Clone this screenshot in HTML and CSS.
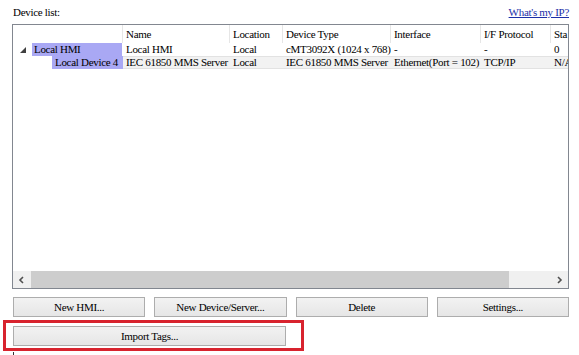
FILE: index.html
```html
<!DOCTYPE html>
<html>
<head>
<meta charset="utf-8">
<link rel="stylesheet" href="styles.css">
</head>
<body>
<div class="page">
  <div class="topbar">
    <span class="label">Device list:</span>
    <a class="link" href="#">What's my IP?</a>
  </div>
  <div class="listbox">
    <div class="grid">
      <div class="hrow">
        <div class="c c0"></div>
        <div class="c c1">Name</div>
        <div class="c c2">Location</div>
        <div class="c c3">Device Type</div>
        <div class="c c4">Interface</div>
        <div class="c c5">I/F Protocol</div>
        <div class="c c6">Sta</div>
      </div>
      <div class="row">
        <div class="c c0 tree">
          <svg class="twisty" width="6" height="6" viewBox="0 0 6 6"><polygon points="6,0 6,6 0,6" fill="#404040"/></svg>
          <span class="hl hl1">Local HMI</span>
        </div>
        <div class="c c1">Local HMI</div>
        <div class="c c2">Local</div>
        <div class="c c3">cMT3092X (1024 x 768)</div>
        <div class="c c4">-</div>
        <div class="c c5">-</div>
        <div class="c c6">0</div>
      </div>
      <div class="row alt">
        <div class="c c0 tree">
          <span class="hl hl2">Local Device 4</span>
        </div>
        <div class="c c1">IEC 61850 MMS Server</div>
        <div class="c c2">Local</div>
        <div class="c c3">IEC 61850 MMS Server</div>
        <div class="c c4">Ethernet(Port = 102)</div>
        <div class="c c5">TCP/IP</div>
        <div class="c c6">N/A</div>
      </div>
    </div>
    <div class="hscroll">
      <div class="arrow"><svg width="7" height="8" viewBox="0 0 7 8"><polyline points="5,1 2,4 5,7" fill="none" stroke="#505050" stroke-width="1.6"/></svg></div>
      <div class="thumb"></div>
      <div class="track"></div>
      <div class="arrow"><svg width="7" height="8" viewBox="0 0 7 8"><polyline points="2,1 5,4 2,7" fill="none" stroke="#505050" stroke-width="1.6"/></svg></div>
    </div>
  </div>
  <div class="buttons">
    <button class="btn">New HMI...</button>
    <button class="btn">New Device/Server...</button>
    <button class="btn">Delete</button>
    <button class="btn">Settings...</button>
  </div>
  <div class="redbox">
    <button class="btn wide">Import Tags...</button>
  </div>
  <div class="mark"></div>
</div>
</body>
</html>
```

FILE: styles.css
```css
html, body {
  margin: 0;
  padding: 0;
  background: #ffffff;
}
body {
  font-family: "Liberation Serif", "Times New Roman", serif;
  font-size: 11px;
  letter-spacing: -0.3px;
  color: #000;
  width: 579px;
  height: 355px;
  overflow: hidden;
}
.page {
  display: flex;
  flex-direction: column;
}
.topbar {
  height: 24px;
  display: flex;
  align-items: center;
  justify-content: space-between;
  padding: 0 10px 0 13px;
}
.link {
  color: #1c2fa8;
  text-decoration: underline;
}
.listbox {
  margin-left: 12px;
  width: 555px;
  height: 263px;
  border: 1px solid #828790;
  display: flex;
  flex-direction: column;
  overflow: hidden;
}
.grid {
  flex: 1;
  display: flex;
  flex-direction: column;
}
.hrow, .row {
  display: grid;
  grid-template-columns: 110px 107px 53px 108px 90px 70px 40px;
  white-space: nowrap;
}
.hrow {
  height: 18px;
}
.hrow .c {
  line-height: 18px;
  padding-left: 3px;
  border-right: 1px solid #e6e6e6;
}
.hrow .c0 {
  padding-left: 0;
}
.row {
  height: 13px;
}
.c {
  overflow: hidden;
  padding-left: 3px;
  line-height: 13px;
}
.row .c0 {
  padding-left: 0;
}
.alt .c {
  background: #f2f2f2;
  box-shadow: inset 0 1px 0 #e2e2e2, inset 0 -1px 0 #e2e2e2;
}
.alt .c0 {
  background: transparent;
  box-shadow: none;
}
.tree {
  display: flex;
  align-items: center;
  height: 13px;
}
.twisty {
  margin-left: 7px;
  margin-right: 6px;
}
.hl {
  background: #a9a8f4;
  height: 13px;
  line-height: 13px;
  display: block;
}
.hl1 {
  width: 88px;
  padding-left: 2px;
}
.hl2 {
  margin-left: 39px;
  width: 68px;
  padding-left: 3px;
}
.hscroll {
  height: 17px;
  display: flex;
  background: #f0f0f0;
}
.arrow {
  width: 17px;
  display: flex;
  align-items: center;
  justify-content: center;
}
.thumb {
  width: 478px;
  margin: 0 1px;
  background: #cdcdcd;
}
.track {
  flex: 1;
}
.buttons {
  margin: 8px 0 0 13px;
  width: 556px;
  display: grid;
  grid-template-columns: repeat(4, 1fr);
  column-gap: 9px;
}
.btn {
  font-family: "Liberation Serif", "Times New Roman", serif;
  font-size: 11px;
  letter-spacing: -0.3px;
  color: #000;
  height: 20px;
  padding: 0;
  border: 1px solid #adadad;
  background: linear-gradient(#f2f2f2, #e6e6e6);
  border-radius: 0;
}
.redbox {
  margin: 3px 0 0 3px;
  width: 284px;
  border: 3px solid #d8232e;
  padding: 3px 4px 2px 7px;
}
.wide {
  width: 273px;
  display: block;
}
.mark {
  margin: 1px 0 0 13px;
  width: 1px;
  height: 3px;
  background: #333;
}
```
